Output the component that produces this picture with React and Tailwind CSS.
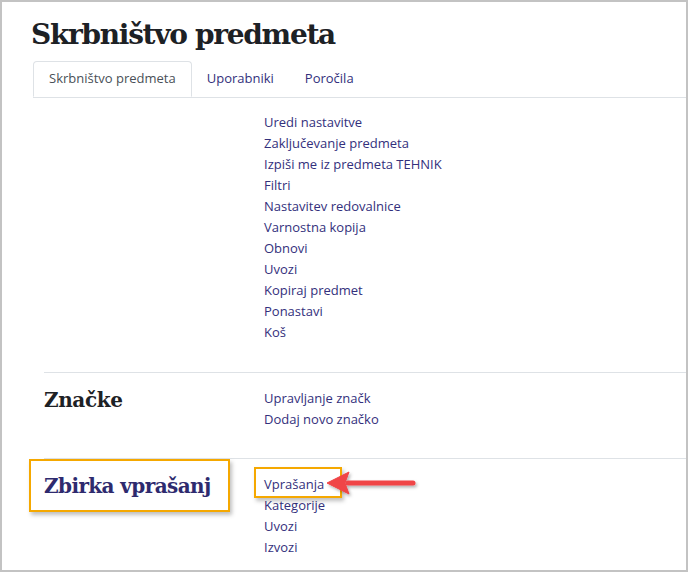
export default function App() {
  const serif = { fontFamily: '"DejaVu Serif", "Liberation Serif", serif' };
  const sans = { fontFamily: '"Open Sans", "Noto Sans", sans-serif' };

  const general = [
    "Uredi nastavitve",
    "Zaključevanje predmeta",
    "Izpiši me iz predmeta TEHNIK",
    "Filtri",
    "Nastavitev redovalnice",
    "Varnostna kopija",
    "Obnovi",
    "Uvozi",
    "Kopiraj predmet",
    "Ponastavi",
    "Koš",
  ];

  return (
    <div className="w-[688px] h-[572px] bg-[#c3c3c3] pt-[2px] pl-[2px] pr-[2px] pb-[2px]" style={sans}>
      <div className="w-full h-full bg-white overflow-hidden relative">
        {/* title */}
        <h1 className="ml-[29px] mt-[13px] text-[28px] leading-[40px] font-bold text-[#1d2125] tracking-[-1.3px]" style={serif}>
          Skrbništvo predmeta
        </h1>

        {/* tabs */}
        <div className="ml-[31px] mt-[6px] flex border-b border-[#dee2e6] text-[13px]">
          <div className="h-[36px] px-[15px] flex items-center border border-[#dee2e6] border-b-white rounded-t-[4px] -mb-px bg-white text-[#495057]">
            Skrbništvo predmeta
          </div>
          <div className="h-[36px] pl-[15px] pr-[16px] flex items-center text-[#33307c]">Uporabniki</div>
          <div className="h-[36px] px-[15px] flex items-center text-[#33307c]">Poročila</div>
        </div>

        {/* sections */}
        <div className="ml-[42px]">
          <div className="flex pt-[14px] pb-[29px]">
            <div className="w-[220px]" />
            <ul className="text-[13px] leading-[21px] text-[#33307c]">
              {general.map((t) => (
                <li key={t}>{t}</li>
              ))}
            </ul>
          </div>

          <div className="flex border-t border-[#dee2e6] pt-[15px] pb-[28px]">
            <h3 className="w-[220px] text-[20px] leading-[26px] font-bold text-[#1d2125] tracking-[-0.4px] mt-[-1px]" style={serif}>
              Značke
            </h3>
            <ul className="text-[13px] leading-[21px] text-[#33307c]">
              <li>Upravljanje značk</li>
              <li>Dodaj novo značko</li>
            </ul>
          </div>

          <div className="flex border-t border-[#dee2e6] pt-[15px]">
            <div className="w-[220px] relative">
              <h3 className="text-[20px] leading-[26px] font-bold text-[#2e2a6e] tracking-[-0.6px] mt-[-1px]" style={serif}>
                Zbirka vprašanj
              </h3>
              <span className="absolute left-[-15px] top-[-15px] w-[201px] h-[53px] border-2 border-[#f5a800] shadow-[2px_3px_4px_rgba(0,0,0,0.25)]" />
            </div>
            <ul className="text-[13px] leading-[21px] text-[#33307c] relative">
              <li className="relative">
                Vprašanja
                <span className="absolute left-[-10px] top-[-7px] w-[88px] h-[31px] border-2 border-[#f5a800] shadow-[2px_3px_4px_rgba(0,0,0,0.25)]" />
                <svg className="absolute left-[62px] top-[-4px] overflow-visible" width="92" height="28" viewBox="0 0 92 28">
                  <defs>
                    <filter id="sh" x="-20%" y="-50%" width="140%" height="200%">
                      <feDropShadow dx="1.5" dy="2" stdDeviation="1.5" floodColor="#000" floodOpacity="0.3" />
                    </filter>
                  </defs>
                  <g filter="url(#sh)" fill="#f04446" stroke="#f04446">
                    <line x1="22" y1="13" x2="87" y2="13" strokeWidth="5" strokeLinecap="round" />
                    <path d="M1 13 L23 2 L19 13 L23 24 Z" strokeWidth="1" strokeLinejoin="round" />
                  </g>
                </svg>
              </li>
              <li>Kategorije</li>
              <li>Uvozi</li>
              <li>Izvozi</li>
            </ul>
          </div>
        </div>
      </div>
    </div>
  );
}
